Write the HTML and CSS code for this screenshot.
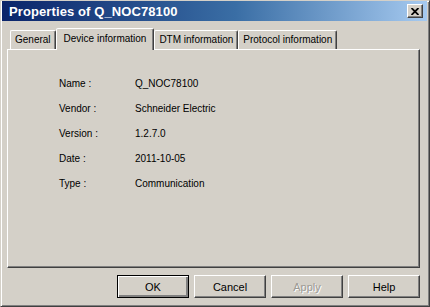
FILE: index.html
```html
<!DOCTYPE html>
<html lang="en">
<head>
    <meta charset="UTF-8">
    <title>Properties of Q_NOC78100</title>
    <link rel="stylesheet" href="styles.css">
</head>
<body>
    <div class="window">
        <div class="titlebar">
            <span class="title">Properties of Q_NOC78100</span>
            <button class="close-btn" type="button">
                <svg width="8" height="7" viewBox="0 0 8 7">
                    <path d="M0.5 0 L7.5 7 M7.5 0 L0.5 7" stroke="#000" stroke-width="1.8" fill="none"/>
                </svg>
            </button>
        </div>

        <div class="tabs">
            <div class="tab">General</div>
            <div class="tab active">Device information</div>
            <div class="tab">DTM information</div>
            <div class="tab">Protocol information</div>
        </div>

        <div class="panel">
            <div class="info-grid">
                <span class="label">Name :</span>
                <span class="value">Q_NOC78100</span>
                <span class="label">Vendor :</span>
                <span class="value">Schneider Electric</span>
                <span class="label">Version :</span>
                <span class="value">1.2.7.0</span>
                <span class="label">Date :</span>
                <span class="value">2011-10-05</span>
                <span class="label">Type :</span>
                <span class="value">Communication</span>
            </div>
        </div>

        <div class="button-row">
            <button class="btn default" type="button">OK</button>
            <button class="btn" type="button">Cancel</button>
            <button class="btn disabled" type="button">Apply</button>
            <button class="btn" type="button">Help</button>
        </div>
    </div>
</body>
</html>
```

FILE: styles.css
```css
body {
    margin: 0;
    background-color: #d4d0c8;
    font-family: "Liberation Sans", Arial, sans-serif;
    font-size: 10px;
    color: #000;
}

.window {
    width: 430px;
    height: 307px;
    box-sizing: border-box;
    border: 1px solid;
    border-color: #d4d0c8 #404040 #404040 #d4d0c8;
    box-shadow: inset 1px 1px #fff, inset -1px -1px #808080;
    padding: 0 2px 2px 1px;
    display: flex;
    flex-direction: column;
}

/* title bar */
.titlebar {
    height: 20px;
    display: flex;
    align-items: center;
    justify-content: space-between;
    padding: 0 4px 0 7px;
    background: linear-gradient(to right, #0a246a 0%, #3a6ea5 55%, #a6caf0 100%);
}

.title {
    color: #fff;
    font-weight: bold;
    font-size: 13px;
    letter-spacing: 0.1px;
}

.close-btn {
    width: 16px;
    height: 14px;
    padding: 0;
    margin: 0;
    background-color: #d4d0c8;
    border: 1px solid;
    border-color: #fff #404040 #404040 #fff;
    box-shadow: inset -1px -1px #808080;
    display: flex;
    align-items: center;
    justify-content: center;
}

/* tabs */
.tabs {
    display: flex;
    align-items: flex-end;
    margin-top: 7px;
    padding-left: 8px;
    height: 21px;
    position: relative;
    z-index: 1;
}

.tab {
    height: 19px;
    line-height: 18px;
    padding: 0 4px;
    box-sizing: border-box;
    border: 1px solid;
    border-bottom: none;
    border-color: #fff #404040 transparent #fff;
    box-shadow: inset -1px 0 #808080;
    border-radius: 2px 2px 0 0;
    white-space: nowrap;
}

.tab.active {
    height: 22px;
    line-height: 19px;
    padding: 0 7px;
    margin-bottom: -1px;
    background-color: #d4d0c8;
}

/* panel */
.panel {
    margin: 0 7px 0 5px;
    height: 219px;
    box-sizing: border-box;
    border: 1px solid;
    border-color: #fff #404040 #404040 #fff;
    box-shadow: inset -1px -1px #808080;
    padding: 21px 0 0 51px;
}

.info-grid {
    display: grid;
    grid-template-columns: 76px auto;
    grid-auto-rows: 25px;
    align-items: center;
}

/* buttons */
.button-row {
    display: flex;
    justify-content: flex-end;
    gap: 5px;
    margin-top: 7px;
    padding-right: 7px;
}

.btn {
    width: 72px;
    height: 23px;
    padding: 0;
    font-family: "Liberation Sans", Arial, sans-serif;
    font-size: 11px;
    color: #000;
    background-color: #d4d0c8;
    border: 1px solid;
    border-color: #fff #404040 #404040 #fff;
    box-shadow: inset -1px -1px #808080;
}

.btn.default {
    border: 1px solid #000;
    box-shadow: inset 1px 1px #fff, inset -2px -2px #808080;
}

.btn.disabled {
    color: #9c9a94;
    text-shadow: 1px 1px #fff;
}
```
